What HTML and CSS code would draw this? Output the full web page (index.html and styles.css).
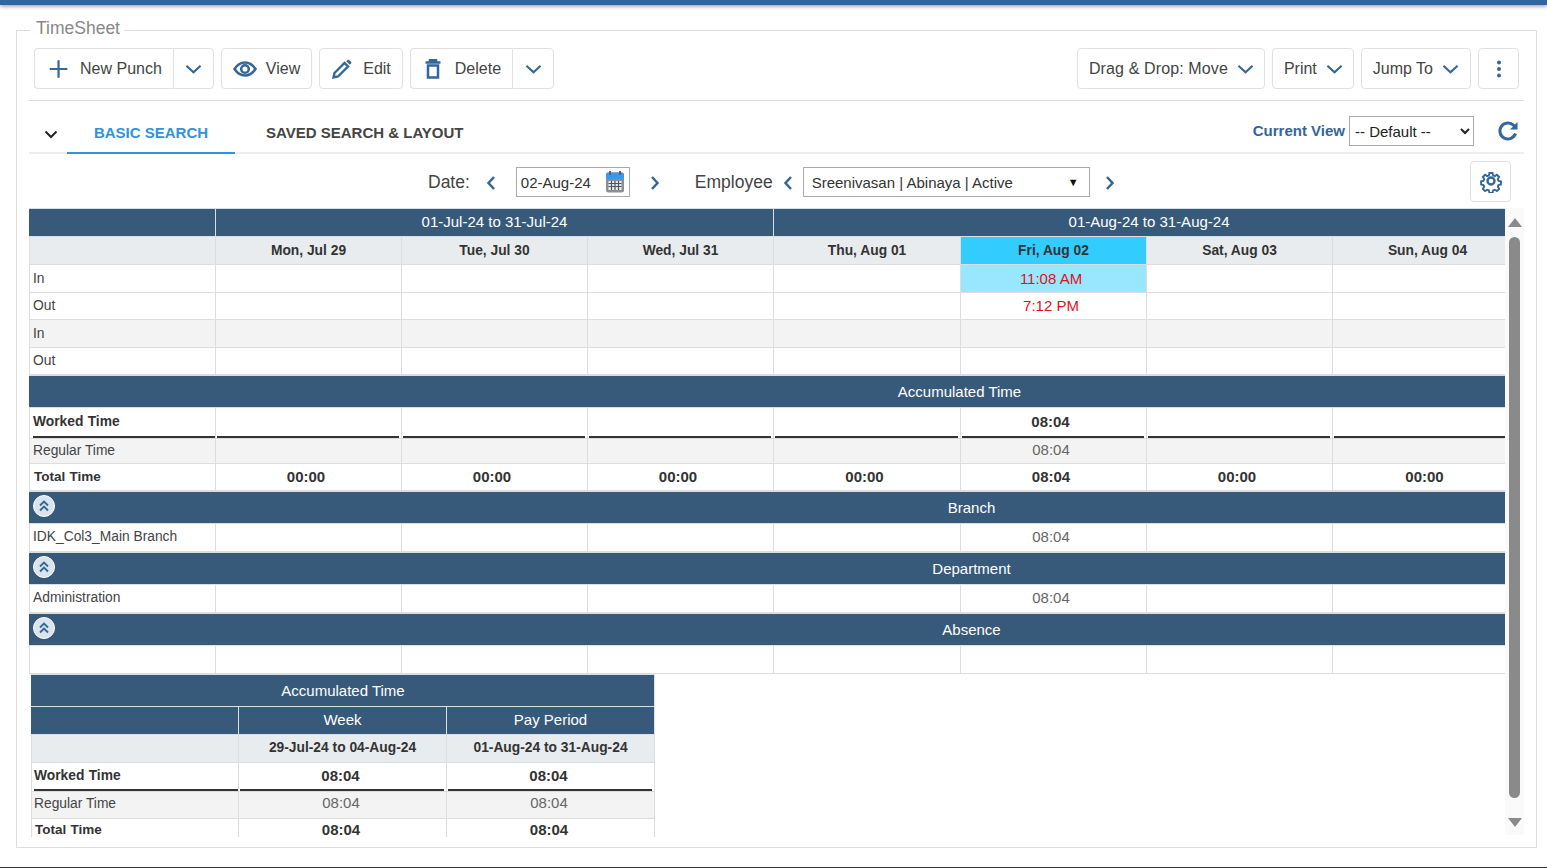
FILE: index.html
```html
<!DOCTYPE html>
<html lang="en">
<head>
    <meta charset="UTF-8">
    <title>TimeSheet</title>
    <link rel="stylesheet" href="styles.css">
</head>
<body>
    <div class="top-bar"></div>
    <fieldset class="panel">
        <legend>TimeSheet</legend>

        <div class="toolbar">
            <div class="btn-group">
                <button class="btn"><svg class="ico" viewBox="0 0 20 20"><path d="M11.400 2v16M3.400 10h16"/></svg><span class="gap-l">New Punch</span></button>
                <button class="btn btn-caret"><svg class="chev" viewBox="0 0 18 10"><path d="M1.500 1.500 9 8.500l7.500-7"/></svg></button>
            </div>
            <button class="btn"><svg class="ico-eye" viewBox="0 0 24 16"><path d="M1.500 8C4.500 3.500 8 1.500 12 1.500S19.500 3.500 22.500 8C19.500 12.500 16 14.500 12 14.500S4.500 12.500 1.500 8Z"/><circle cx="12" cy="8" r="3.800"/></svg><span class="gap-s">View</span></button>
            <button class="btn"><svg class="ico ico-pencil" viewBox="0 0 22 22"><path d="M2.500 19.500l1-4.500L13.500 5 17 8.500 7 18.500Z"/><path class="solid" d="M15.300 3.200l1.300-1.300a1 1 0 0 1 1.400 0l2.100 2.100a1 1 0 0 1 0 1.400l-1.300 1.300Z"/></svg><span class="gap-m">Edit</span></button>
            <div class="btn-group">
                <button class="btn"><svg class="ico-trash" viewBox="0 0 16 20"><path d="M.5 3.500h15M5 3V1h6v2"/><path d="M3 6.500h10v12H3Z"/></svg><span class="gap-l">Delete</span></button>
                <button class="btn btn-caret btn-caret-wide"><svg class="chev" viewBox="0 0 18 10"><path d="M1.500 1.500 9 8.500l7.500-7"/></svg></button>
            </div>
            <div class="toolbar-right">
                <button class="btn btn-drag">Drag &amp; Drop: Move<svg class="chev chev-after" viewBox="0 0 18 10"><path d="M1.500 1.500 9 8.500l7.500-7"/></svg></button>
                <button class="btn btn-print">Print<svg class="chev chev-after" viewBox="0 0 18 10"><path d="M1.500 1.500 9 8.500l7.500-7"/></svg></button>
                <button class="btn">Jump To<svg class="chev chev-after" viewBox="0 0 18 10"><path d="M1.500 1.500 9 8.500l7.500-7"/></svg></button>
                <button class="btn btn-dots"><svg class="dots" viewBox="0 0 4 18"><circle cx="2" cy="2.500" r="2"/><circle cx="2" cy="9" r="2"/><circle cx="2" cy="15.500" r="2"/></svg></button>
            </div>
        </div>

        <div class="tabs">
            <svg class="tabs-toggle" viewBox="0 0 14 9"><path d="M1.500 1.500 7 7l5.500-5.500"/></svg>
            <div class="tab active">BASIC SEARCH</div>
            <div class="tab">SAVED SEARCH &amp; LAYOUT</div>
            <div class="view-picker">
                <label for="viewSelect">Current View</label>
                <select id="viewSelect"><option>-- Default --</option></select>
                <svg class="refresh" viewBox="0 0 22 22"><path d="M18.500 13.500A8 8 0 1 1 16.500 5.200L19 7.500"/><path class="solid" d="M20.500 2v7.500H13Z"/></svg>
            </div>
        </div>

        <div class="filters">
            <span class="filter-label">Date:</span>
            <svg class="nav nav-date" viewBox="0 0 10 16"><path d="M8 2 2.500 8 8 14"/></svg>
            <div class="date-box">02-Aug-24
                <svg class="cal" viewBox="0 0 20 22">
                    <rect x="1" y="1.500" width="18" height="20" rx="2.500" fill="#8b8f94"/>
                    <rect x="1" y="1.500" width="18" height="6.500" rx="2" fill="#3c97e6"/>
                    <rect x="4" y="0" width="2" height="4" fill="#5b6167"/>
                    <rect x="14" y="0" width="2" height="4" fill="#5b6167"/>
                    <path d="M3.500 10h13v9h-13Z" fill="#e8eaec"/>
                    <path d="M3.500 12.500h13M3.500 15.500h13M6.500 10v9M10 10v9M13.500 10v9" stroke="#50565c" stroke-width="1.200"/>
                </svg>
            </div>
            <svg class="nav nav-date-next" viewBox="0 0 10 16"><path d="M2 2l5.500 6L2 14"/></svg>
            <span class="filter-label">Employee</span>
            <svg class="nav nav-emp" viewBox="0 0 10 16"><path d="M8 2 2.500 8 8 14"/></svg>
            <div class="emp-box"><span>Sreenivasan | Abinaya | Active</span><span class="emp-arrow">▼</span></div>
            <svg class="nav nav-emp-next" viewBox="0 0 10 16"><path d="M2 2l5.500 6L2 14"/></svg>
            <button class="btn btn-gear">
                <svg class="gear" viewBox="0 0 24 24"><path d="M10 2h4l.6 3 2.200.9 2.600-1.700 2.800 2.800-1.700 2.600.9 2.200 3 .6v4l-3 .6-.9 2.200 1.700 2.600-2.800 2.800-2.600-1.700-2.200.9-.6 3h-4l-.6-3-2.200-.9-2.600 1.700-2.800-2.800 1.700-2.600-.9-2.200-3-.6v-4l3-.6.9-2.200-1.700-2.600 2.800-2.800 2.600 1.700 2.200-.9Z" transform="translate(2.400 2.400) scale(.8)"/><circle cx="12" cy="12" r="3.500"/></svg>
            </button>
        </div>

        <div class="grid-area">
            <div class="grid-scroll">
                <table class="sheet">
                    <colgroup><col class="c-label"><col class="c-day"><col class="c-day"><col class="c-day"><col class="c-day-wide"><col class="c-day"><col class="c-day"><col class="c-day"></colgroup>
                    <tr class="r-head">
                        <th></th>
                        <th colspan="3">01-Jul-24 to 31-Jul-24</th>
                        <th colspan="4" class="aug-range">01-Aug-24 to 31-Aug-24</th>
                    </tr>
                    <tr class="r-days">
                        <td></td><td>Mon, Jul 29</td><td>Tue, Jul 30</td><td>Wed, Jul 31</td><td>Thu, Aug 01</td><td class="today">Fri, Aug 02</td><td>Sat, Aug 03</td><td class="day-last">Sun, Aug 04</td>
                    </tr>
                    <tr class="r-punch">
                        <td class="lbl">In</td><td></td><td></td><td></td><td></td><td class="punch punch-in">11:08 AM</td><td></td><td></td>
                    </tr>
                    <tr class="r-punch">
                        <td class="lbl lbl-up">Out</td><td></td><td></td><td></td><td></td><td class="punch">7:12 PM</td><td></td><td></td>
                    </tr>
                    <tr class="r-punch alt">
                        <td class="lbl">In</td><td></td><td></td><td></td><td></td><td></td><td></td><td></td>
                    </tr>
                    <tr class="r-punch">
                        <td class="lbl lbl-up">Out</td><td></td><td></td><td></td><td></td><td></td><td></td><td></td>
                    </tr>
                    <tr class="r-section">
                        <th colspan="8"><div class="sec-acc">Accumulated Time</div></th>
                    </tr>
                    <tr class="r-worked">
                        <td><div class="rule rule-first lbl-b">Worked Time</div></td><td><div class="rule"></div></td><td><div class="rule"></div></td><td><div class="rule"></div></td><td><div class="rule"></div></td><td><div class="rule value">08:04</div></td><td><div class="rule"></div></td><td><div class="rule"></div></td>
                    </tr>
                    <tr class="r-regular alt">
                        <td class="lbl">Regular Time</td><td></td><td></td><td></td><td></td><td class="num">08:04</td><td></td><td></td>
                    </tr>
                    <tr class="r-total">
                        <td class="lbl-b lbl-total">Total Time</td><td class="total">00:00</td><td class="total">00:00</td><td class="total">00:00</td><td class="total">00:00</td><td class="total">08:04</td><td class="total">00:00</td><td class="total total-last">00:00</td>
                    </tr>
                    <tr class="r-section">
                        <th colspan="8"><div class="sec-row"><svg class="sec-ico" viewBox="0 0 22 22"><circle cx="11" cy="11" r="10.500"/><path d="M7 10.500l4-4 4 4M7 15.500l4-4 4 4"/></svg><span class="sec-title">Branch</span></div></th>
                    </tr>
                    <tr class="r-detail">
                        <td class="lbl">IDK_Col3_Main Branch</td><td></td><td></td><td></td><td></td><td class="num">08:04</td><td></td><td></td>
                    </tr>
                    <tr class="r-section">
                        <th colspan="8"><div class="sec-row"><svg class="sec-ico" viewBox="0 0 22 22"><circle cx="11" cy="11" r="10.500"/><path d="M7 10.500l4-4 4 4M7 15.500l4-4 4 4"/></svg><span class="sec-title">Department</span></div></th>
                    </tr>
                    <tr class="r-detail">
                        <td class="lbl">Administration</td><td></td><td></td><td></td><td></td><td class="num">08:04</td><td></td><td></td>
                    </tr>
                    <tr class="r-section">
                        <th colspan="8"><div class="sec-row"><svg class="sec-ico" viewBox="0 0 22 22"><circle cx="11" cy="11" r="10.500"/><path d="M7 10.500l4-4 4 4M7 15.500l4-4 4 4"/></svg><span class="sec-title">Absence</span></div></th>
                    </tr>
                    <tr class="r-detail">
                        <td></td><td></td><td></td><td></td><td></td><td></td><td></td><td></td>
                    </tr>
                </table>

                <table class="summary">
                    <colgroup><col class="s-col-first"><col class="s-col"><col class="s-col"></colgroup>
                    <tr class="r-title">
                        <th colspan="3">Accumulated Time</th>
                    </tr>
                    <tr class="r-head">
                        <th></th><th>Week</th><th>Pay Period</th>
                    </tr>
                    <tr class="r-days">
                        <td></td><td>29-Jul-24 to 04-Aug-24</td><td>01-Aug-24 to 31-Aug-24</td>
                    </tr>
                    <tr class="r-worked">
                        <td><div class="rule rule-first lbl-b">Worked Time</div></td><td><div class="rule value">08:04</div></td><td><div class="rule value">08:04</div></td>
                    </tr>
                    <tr class="r-regular alt">
                        <td class="lbl">Regular Time</td><td class="num">08:04</td><td class="num">08:04</td>
                    </tr>
                    <tr class="r-total">
                        <td class="lbl-b lbl-total">Total Time</td><td class="total">08:04</td><td class="total">08:04</td>
                    </tr>
                </table>
            </div>
            <div class="scrollbar">
                <span class="arrow-up"></span>
                <div class="thumb"></div>
                <span class="arrow-down"></span>
            </div>
        </div>
    </fieldset>
    <div class="bottom-line"></div>
</body>
</html>
```

FILE: styles.css
```css
* {
    box-sizing: border-box;
}
html, body {
    height: 868px;
    overflow: hidden;
}
body {
    margin: 0;
    background-color: #fff;
    font-family: "Liberation Sans", Arial, sans-serif;
    color: #444;
    display: flex;
    flex-direction: column;
}
.top-bar {
    height: 5px;
    background-color: #336699;
    box-shadow: 0 1px 4px rgba(0,0,0,0.45);
}
.bottom-line {
    height: 1px;
    margin-top: auto;
    background-color: #333;
}

/* panel */
.panel {
    margin: 15px 10px 0 16px;
    padding: 0 12px 12px;
    border: 1px solid #ddd;
    min-width: 0;
}
.panel legend {
    height: 20px;
    margin-left: 1px;
    padding: 0 4px 0 6px;
    font-size: 17.500px;
    line-height: 16px;
    color: #888;
}

/* toolbar */
.toolbar {
    display: flex;
    gap: 7px;
    height: 61px;
    padding: 8px 5px 0;
    border-bottom: 1px solid #ddd;
}
.toolbar-right {
    margin-left: auto;
    display: flex;
    gap: 7px;
}
.btn {
    height: 41px;
    padding: 0 11px;
    display: inline-flex;
    align-items: center;
    background: #fff;
    border: 1px solid #e1e1e1;
    border-radius: 4px;
    font-family: inherit;
    font-size: 16px;
    color: #444;
}
.btn-group {
    display: flex;
}
.btn-group .btn:first-child {
    border-radius: 4px 0 0 4px;
    border-right: none;
}
.btn-group .btn-caret {
    width: 41px;
    padding: 0;
    justify-content: center;
    border-radius: 0 4px 4px 0;
}
.btn-group .btn-caret-wide {
    width: 42px;
}
.btn-drag {
    padding-right: 10px;
    letter-spacing: .12px;
}
.btn-print {
    padding-right: 10px;
}
.gap-l {
    margin-left: 12px;
}
.gap-m {
    margin-left: 10px;
}
.gap-s {
    margin-left: 9px;
}
.ico {
    width: 22px;
    height: 22px;
    fill: none;
    stroke: #336699;
    stroke-width: 2;
}
.ico-pencil {
    stroke-width: 2.400;
}
.ico-pencil .solid {
    fill: #336699;
    stroke: none;
}
.ico-eye {
    width: 24px;
    height: 16px;
    fill: none;
    stroke: #336699;
    stroke-width: 2.500;
}
.ico-trash {
    width: 16px;
    height: 20px;
    margin: 0 2px 0 3px;
    fill: none;
    stroke: #336699;
    stroke-width: 2.500;
}
.chev {
    width: 17px;
    height: 10px;
    fill: none;
    stroke: #336699;
    stroke-width: 2.200;
}
.chev-after {
    margin-left: 9px;
}
.btn-dots {
    width: 41px;
    padding: 0;
    justify-content: center;
}
.dots {
    width: 4px;
    height: 18px;
    fill: #336699;
}

/* tabs */
.tabs {
    display: flex;
    align-items: flex-end;
    height: 53px;
    border-bottom: 2px solid #eee;
}
.tabs-toggle {
    width: 14px;
    height: 9px;
    margin: 0 0 13px 15px;
    fill: none;
    stroke: #222;
    stroke-width: 2;
}
.tab {
    height: 34px;
    margin-bottom: -2px;
    font-size: 15px;
    font-weight: bold;
    line-height: 26px;
    color: #444;
    text-align: center;
}
.tab.active {
    width: 168px;
    margin-left: 9px;
    color: #2f93e0;
    border-bottom: 2px solid #2f93e0;
}
.tab:not(.active) {
    margin-left: 31px;
}
.view-picker {
    margin: 0 5px 6px auto;
    display: flex;
    align-items: center;
}
.view-picker label {
    margin: 0 4px 2px 0;
    font-size: 15px;
    font-weight: bold;
    color: #336699;
}
.view-picker select {
    width: 125px;
    height: 30px;
    padding-left: 1px;
    background: #fff;
    border: 1px solid #aaa;
    font-family: inherit;
    font-size: 15px;
    color: #222;
}
.refresh {
    width: 22px;
    height: 22px;
    margin-left: 23px;
    fill: none;
    stroke: #336699;
    stroke-width: 3;
}
.refresh .solid {
    fill: #336699;
    stroke: none;
}

/* filter row */
.filters {
    display: flex;
    align-items: center;
    height: 54px;
    padding: 2px 13px 0 399px;
}
.filter-label {
    font-size: 17.500px;
}
.nav {
    width: 10px;
    height: 16px;
    fill: none;
    stroke: #336699;
    stroke-width: 2.500;
}
.nav-date {
    margin: 2px 20px 0 16px;
}
.nav-date-next {
    margin: 2px 35px 0 20px;
}
.nav-emp {
    margin: 2px 10px 0 10px;
}
.nav-emp-next {
    margin: 2px 0 0 15px;
}
.date-box {
    width: 114px;
    height: 30px;
    padding: 0 4px;
    display: flex;
    align-items: center;
    justify-content: space-between;
    border: 1px solid #aaa;
    font-size: 15px;
    color: #333;
}
.cal {
    width: 20px;
    height: 22px;
}
.emp-box {
    width: 287px;
    height: 30px;
    padding: 0 10px 0 8px;
    display: flex;
    align-items: center;
    justify-content: space-between;
    border: 1px solid #aaa;
    font-size: 15px;
    color: #333;
}
.emp-arrow {
    font-size: 11px;
    color: #111;
}
.btn-gear {
    width: 41px;
    margin: -2px 0 0 auto;
    padding: 0;
    justify-content: center;
}
.gear {
    width: 24px;
    height: 24px;
    fill: none;
    stroke: #336699;
    stroke-width: 2.400;
}

/* grid */
.grid-area {
    display: flex;
    height: 627px;
}
.grid-scroll {
    width: 1476px;
    height: 631px;
    overflow: hidden;
    flex: none;
}
.scrollbar {
    width: 19px;
    display: flex;
    flex-direction: column;
    align-items: center;
    background-color: #fafafa;
}
.arrow-up {
    margin-top: 10px;
    border-left: 7px solid transparent;
    border-right: 7px solid transparent;
    border-bottom: 9px solid #8a8a8a;
}
.arrow-down {
    margin-top: 20px;
    border-left: 7px solid transparent;
    border-right: 7px solid transparent;
    border-top: 9px solid #8a8a8a;
}
.thumb {
    width: 11px;
    height: 561px;
    margin-top: 10px;
    background-color: #8a8a8a;
    border-radius: 6px;
}
table {
    table-layout: fixed;
    border-collapse: collapse;
    font-size: 14px;
}
.sheet {
    width: 1489px;
}
.c-label, .c-day {
    width: 186px;
}
.c-day-wide {
    width: 187px;
}
th {
    padding: 0;
    background-color: #375a7b;
    border: 1px solid #d8e0e6;
    font-size: 15px;
    font-weight: normal;
    color: #fff;
}
th:first-child {
    border-left-color: #375a7b;
}
td {
    padding: 0;
    border: 1px solid #ddd;
    text-align: center;
    color: #333;
}
.r-head {
    height: 28px;
}
.r-head th {
    padding-bottom: 2px;
}
.aug-range {
    padding-left: 6px;
}
.r-days {
    height: 28px;
}
.r-days td {
    padding-bottom: 1px;
    background-color: #e9ecef;
    font-size: 13.800px;
    font-weight: bold;
}
.r-days .today {
    background-color: #33ccff;
}
.r-days .day-last {
    padding-left: 4px;
}
.r-punch {
    height: 27.500px;
}
.alt td {
    background-color: #f3f3f3;
}
.lbl {
    padding-left: 3px;
    font-size: 13.800px;
    text-align: left;
    color: #444;
}
.lbl-up {
    padding-bottom: 1px;
}
.punch {
    padding-right: 5px;
    font-size: 15px;
    color: #e0101a;
}
.punch-in {
    background-color: #99e6ff;
}
.r-section {
    height: 33px;
}
.r-section th {
    border-top: 2px solid #ddd;
}
.sec-acc {
    padding-left: 371px;
}
.sec-row {
    display: flex;
    align-items: flex-start;
    height: 31px;
}
.sec-ico {
    width: 22px;
    height: 22px;
    margin: 3px 0 0 3px;
    flex: none;
    fill: #dbe4ec;
    stroke: #fff;
}
.sec-ico path {
    fill: none;
    stroke: #336699;
    stroke-width: 1.800;
}
.sec-title {
    flex: 1;
    padding-left: 370px;
    line-height: 31px;
    text-align: center;
}
.r-worked {
    height: 30px;
}
.r-worked td {
    vertical-align: top;
    font-weight: bold;
}
.rule {
    height: 30px;
    margin: 0 2px 0 1px;
    border-bottom: 2px solid #333;
    line-height: 28px;
}
.rule-first {
    margin: 0 0 0 3px;
    text-align: left;
}
.value {
    padding-right: 5px;
    font-size: 15px;
}
.lbl-b {
    font-size: 13.800px;
    font-weight: bold;
    word-spacing: .5px;
    color: #333;
}
.lbl-total {
    padding-left: 4px;
    font-size: 13.500px;
    text-align: left;
}
.r-regular {
    height: 25px;
}
.r-regular td {
    padding-bottom: 2px;
}
.r-regular .num {
    padding-bottom: 4px;
}
.num {
    padding-right: 5px;
    font-size: 15px;
    color: #666;
}
.r-total {
    height: 27px;
}
.total {
    padding-right: 5px;
    font-size: 15px;
    font-weight: bold;
}
.total-last {
    padding-right: 2px;
}
.r-detail {
    height: 28px;
}
.r-detail td {
    padding-bottom: 1px;
}
.r-detail .num {
    padding-bottom: 2px;
}
.r-detail .lbl {
    padding: 5px 0 0 3px;
    vertical-align: top;
}

/* summary table under the grid */
.summary {
    width: 623px;
    margin: 0 0 0 2px;
}
.s-col-first {
    width: 207px;
}
.s-col {
    width: 208px;
}
.r-title {
    height: 32px;
}
.summary .r-days td {
    padding-bottom: 3px;
}
.summary .r-worked {
    height: 28px;
}
.summary .rule {
    height: 28px;
    line-height: 25px;
}
.summary .r-regular {
    height: 27px;
}
.summary .r-regular td {
    padding-bottom: 3px;
}
.summary .r-regular .num {
    padding-bottom: 6px;
}
.summary .r-total {
    height: 18px;
}
.summary .r-total td {
    padding-top: 4px;
    line-height: 14px;
    border-bottom: none;
}
.summary .rule-first {
    margin-left: 2px;
}
.summary .lbl {
    padding-left: 2px;
}
.summary .lbl-total {
    padding-left: 3px;
}
.summary .value, .summary .num, .summary .total {
    padding-right: 3px;
}
```
